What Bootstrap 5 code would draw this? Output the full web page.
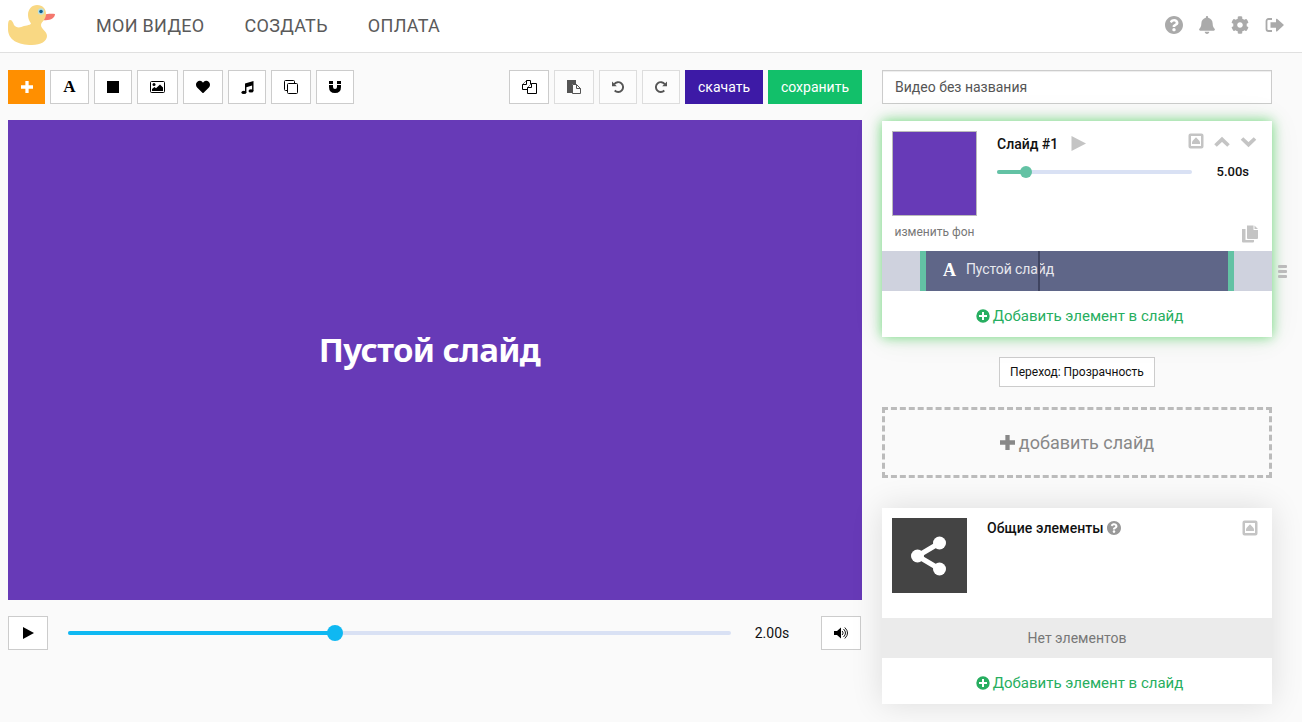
<!DOCTYPE html>
<html lang="ru">
<head>
<meta charset="utf-8">
<title>Видео без названия</title>
<meta name="viewport" content="width=device-width, initial-scale=1">
<link href="https://cdn.jsdelivr.net/npm/bootstrap@5.3.0/dist/css/bootstrap.min.css" rel="stylesheet">
<style>
body{font-family:Roboto,"Liberation Sans",sans-serif;font-size:14px;background:#fafafa;color:#111;height:722px;overflow:hidden}
svg{display:block;fill:currentColor;flex:none}
.topbar{height:53px;background:#fff;border-bottom:1px solid #e0e0e0;padding:0 18px 0 8px}
.topicons{padding-bottom:2px}
.topnav{gap:40px;margin-left:40px}
.topnav .nav-link{padding:0;color:#5a5a5a;font-weight:400;font-size:18px;line-height:24px;letter-spacing:.3px}
.topicons{color:#aaa}
.workspace{padding:17px 30px 0 8px;gap:20px}
.editor{width:854px}
.tool{height:34px;border:1px solid #ccc;border-radius:0;background:#fff;color:#000;padding:0;display:flex;align-items:center;justify-content:center;font-size:14px}
.tool:disabled{border-color:#ddd;background:#fcfcfc;color:#555;opacity:1}
.tool-add{background:#ff8f00;border-color:#ff8f00;color:#fff}
.tool-get{background:#3d1aa6;border-color:#3d1aa6;color:#fff}
.tool-save{background:#12c06a;border-color:#12c06a;color:#fff}
.w37{width:37px}.w38{width:38px}.w39{width:39px}.w40{width:40px}.w41{width:41px}.w78{width:78px}.w94{width:94px}
.serif-a{font-family:"Liberation Serif",serif;font-weight:700;font-size:17px;line-height:18px}
.stage{height:480px;margin-top:16px;background:#673ab7;color:#fff;font-family:"Noto Sans",sans-serif;font-weight:700;font-size:33px;letter-spacing:-.6px;padding:0 11px 20px 0}
.player{margin-top:16px}
.track{height:4px;border-radius:2px;background:#d9e1f4}
.track-fill{height:4px;border-radius:2px;background:#0fb8f2;display:flex;justify-content:flex-end;align-items:center}
.knob{width:16px;height:16px;border-radius:50%;background:inherit;margin-right:-8px;flex:none}
.mini .track-fill{background:#63c2a4}
.mini .knob{width:12px;height:12px;margin-right:-6px}
.side{width:390px}
.title-input{height:34px;border:1px solid #ccc;border-radius:0;font-size:14px;color:#555;padding:0 12px;box-shadow:inset 0 1px 1px rgba(0,0,0,.075)}
.panel{background:#fff;position:relative}
.panel-active{height:216px;margin-top:17px;box-shadow:0 0 12px #6fdc7b,0 0 30px rgba(0,0,0,.08)}
.panel-common{height:196px;margin-top:30px;box-shadow:0 0 30px rgba(0,0,0,.12)}
.panel-head{padding:10px 14px 0 10px}
.thumb{width:85px;height:85px;background:#673ab7;border:1px solid #bbb}
.caption-bg{font-size:12px;line-height:16px;color:#777;margin-top:8px;width:85px;white-space:nowrap}
.ptitle{font-weight:500;line-height:20px;color:#111;white-space:nowrap}
.greyic{color:#c4c4c4}
.strip{height:40px;background:#cfd2de;padding:0 38px;position:relative}
.clip{height:40px;background:#5f6688;border:solid #63c2a4;border-width:0 6px;color:#e7e8ee;padding:0 0 3px 17px;letter-spacing:-.1px}
.clip .serif-a{font-size:18px}
.cursor{position:absolute;left:156px;top:0;width:2px;height:40px;background:#3f4460}
.grip{position:absolute;right:-15px;top:144px}
.add-link{color:#27ae60;font-size:15px;line-height:20px;gap:3px;text-decoration:none;padding:15px 0 0 5px}
.add-link svg{margin-bottom:1px}
.transition{width:156px;height:30px;font-size:12px;margin:20px auto 0;color:#111}
.add-slide{height:71px;margin-top:20px;border:3px dashed #bbb;color:#888;font-size:18px;gap:4px}
.share{width:75px;height:75px;background:#444;color:#fff;padding:0 2px 0 0}
.empty{height:40px;background:#ebebeb;color:#777}
</style>
</head>
<body>
<svg width="0" height="0" class="position-absolute">
<symbol id="help" viewBox="8 8 496 496"><path d="M504 256c0 136.997-111.043 248-248 248S8 392.997 8 256C8 119.083 119.043 8 256 8s248 111.083 248 248zM262.655 90c-54.497 0-89.255 22.957-116.549 63.758-3.536 5.286-2.353 12.415 2.715 16.258l34.699 26.310c5.205 3.947 12.621 3.008 16.665-2.122 17.864-22.658 30.113-35.797 57.303-35.797 20.429 0 45.698 13.148 45.698 32.958 0 14.976-12.363 22.667-32.534 33.976C247.128 238.528 216 254.941 216 296v4c0 6.627 5.373 12 12 12h56c6.627 0 12-5.373 12-12v-1.333c0-28.462 83.186-29.647 83.186-106.667 0-58.002-60.165-102-116.531-102zM256 338c-25.365 0-46 20.635-46 46 0 25.364 20.635 46 46 46s46-20.636 46-46c0-25.365-20.635-46-46-46z"/></symbol>
<symbol id="plusc" viewBox="0 0 14 14"><path fill-rule="evenodd" d="M7 .3a6.700 6.700 0 1 0 0 13.400a6.700 6.700 0 0 0 0-13.400M6 3h2v3h3v2H8v3H6V8H3V6h3z"/></symbol>
<symbol id="collapse" viewBox="0 0 16 16"><path fill-rule="evenodd" d="M2.500.5h11a2 2 0 0 1 2 2v11a2 2 0 0 1-2 2h-11a2 2 0 0 1-2-2v-11a2 2 0 0 1 2-2M3 3v10h10V3zM4.500 8L8 4.200L11.500 8L12 9.500V11H4V9.500z"/></symbol>
</svg>

<nav class="topbar d-flex align-items-center">
  <svg width="48" height="42" viewBox="0 0 48 42"><path fill="#f4776d" d="M34 9c3 1 7-1 13 0c0 4-5 7-12 6z"/><path fill="#f9d883" d="M20 10c0-6 4-10 9-10c6 0 9 4 9 9c0 6-5 8-5 11c0 4 6 6 6 11c0 5-6 9-15 9C10 40 0 35 0 24c0-5 0-9 2-9c2 0 3 2 4 5c2 3 6 3 10 1c4-1 9-1 6-4c-1-2-2-4-2-7"/><circle cx="33" cy="6.500" r="3.200" fill="#b9dfdf"/><circle cx="33" cy="6.500" r="1.800" fill="#13618f"/></svg>
  <div class="nav topnav"><a class="nav-link" href="#">МОИ ВИДЕО</a><a class="nav-link" href="#">СОЗДАТЬ</a><a class="nav-link" href="#">ОПЛАТА</a></div>
  <div class="topicons d-flex align-items-center ms-auto">
    <svg width="18" height="18"><use href="#help"/></svg>
    <svg style="margin-left:15px" width="18" height="18" viewBox="0 0 448 512"><path d="M224 512c35.320 0 63.970-28.650 63.970-64H160.030c0 35.350 28.650 64 63.970 64zm215.390-149.710c-19.320-20.760-55.470-51.990-55.470-154.290 0-77.700-54.480-139.900-127.940-155.160V32c0-17.670-14.320-32-31.980-32s-31.980 14.330-31.980 32v20.840C118.560 68.100 64.080 130.300 64.080 208c0 102.300-36.150 133.530-55.470 154.290-6 6.450-8.660 14.160-8.610 21.710.11 16.400 12.980 32 32.100 32h383.800c19.120 0 32-15.600 32.100-32 .05-7.550-2.610-15.270-8.610-21.710z"/></svg>
    <svg style="margin-left:15px" width="18" height="18" viewBox="0 0 512 512"><path d="M487.400 315.700l-42.600-24.600c4.300-23.200 4.300-47 0-70.200l42.600-24.600c4.900-2.800 7.100-8.600 5.500-14-11.100-35.600-30-67.800-54.700-94.600-3.800-4.100-10-5.100-14.800-2.300L380.800 110c-17.900-15.400-38.500-27.300-60.800-35.100V25.800c0-5.600-3.900-10.500-9.400-11.700-36.700-8.200-74.300-7.800-109.200 0-5.500 1.200-9.400 6.100-9.400 11.700V75c-22.200 7.900-42.800 19.800-60.800 35.100L88.700 85.500c-4.900-2.800-11-1.900-14.800 2.300-24.700 26.700-43.600 58.900-54.700 94.600-1.700 5.400.6 11.200 5.500 14L67.300 221c-4.300 23.200-4.300 47 0 70.200l-42.600 24.600c-4.900 2.800-7.100 8.600-5.500 14 11.100 35.600 30 67.800 54.700 94.600 3.800 4.100 10 5.100 14.800 2.300l42.600-24.600c17.900 15.400 38.500 27.300 60.800 35.100v49.200c0 5.600 3.900 10.500 9.400 11.700 36.700 8.200 74.300 7.800 109.200 0 5.500-1.200 9.400-6.100 9.400-11.700v-49.200c22.200-7.900 42.800-19.800 60.800-35.100l42.600 24.600c4.900 2.800 11 1.900 14.800-2.300 24.700-26.700 43.600-58.900 54.700-94.600 1.500-5.500-.7-11.300-5.600-14.100zM256 336c-44.100 0-80-35.900-80-80s35.900-80 80-80 80 35.900 80 80-35.900 80-80 80z"/></svg>
    <svg style="margin-left:16px" width="19" height="18" viewBox="0 0 19 18"><path style="fill:none" stroke="currentColor" stroke-width="1.800" d="M7 3H3.500A2 2 0 0 0 1.500 5v8a2 2 0 0 0 2 2H7"/><path d="M5.500 6.200H11V3.300q.2-1 1-.5L18.500 8.500q.5.6 0 1.100L12 15.500q-.8.400-1-.5V11.800H5.500z"/></svg>
  </div>
</nav>

<main class="workspace d-flex">
  <section class="editor">
    <div class="d-flex justify-content-between">
      <div class="d-flex" style="gap:5px">
        <button class="tool tool-add w37"><svg style="margin-bottom:1px" width="12" height="12" viewBox="0 0 11 11"><path d="M4 0h3v4h4v3H7v4H4V7H0V4h4z"/></svg></button>
        <button class="tool w39"><span class="serif-a">A</span></button>
        <button class="tool w38"><svg width="12" height="12"><rect width="12" height="12"/></svg></button>
        <button class="tool w41"><svg width="15" height="12" viewBox="0 0 15 12"><rect x=".5" y=".5" width="14" height="11" rx="1" style="fill:none" stroke="currentColor"/><circle cx="4" cy="3.500" r="1.500"/><path d="M2 10V8l2.500-2L6 7.300L10 3.500l3 3V10z"/></svg></button>
        <button class="tool w40"><svg width="14" height="14" viewBox="0 0 512 512"><path d="M462.300 62.600C407.500 15.900 326 24.300 275.700 76.200L256 96.500l-19.700-20.300C186.100 24.300 104.500 15.900 49.700 62.600c-62.800 53.600-66.100 149.800-9.900 207.900l193.500 199.800c12.500 12.900 32.800 12.900 45.300 0l193.500-199.800c56.300-58.100 53-154.300-9.800-207.900z"/></svg></button>
        <button class="tool w38"><svg width="13" height="13" viewBox="0 0 13 13"><path d="M4 2.500L12.500 0v10h-1.400V4.500L5.400 6.200V11.500H4z"/><ellipse cx="2.900" cy="11.400" rx="2.500" ry="1.600"/><ellipse cx="10" cy="9.900" rx="2.500" ry="1.600"/></svg></button>
        <button class="tool w40"><svg width="14" height="14" viewBox="0 0 14 14" stroke="currentColor" style="fill:none"><path d="M3.500 10.500h-2a1 1 0 0 1-1-1v-8a1 1 0 0 1 1-1h8a1 1 0 0 1 1 1v2"/><rect x="3.500" y="3.500" width="10" height="10" rx="1"/></svg></button>
        <button class="tool w38"><svg width="12" height="12" viewBox="0 0 12 12"><path d="M0 0h4v3H0zM8 0h4v3H8zM0 4h4v2q0 2 2 2t2-2V4h4v2q0 6-6 6T0 6z"/></svg></button>
      </div>
      <div class="d-flex" style="gap:5px">
        <button class="tool w40"><svg width="15" height="14" viewBox="0 0 15 14"><g style="fill:#fff" stroke="currentColor"><path d="M.5 9.500V4.500l4-4h4v9z"/><path d="M.5 4.500h4v-4"/><path d="M5.500 13.500v-6l4-4h5v10z"/><path d="M5.500 7.500h4v-4"/></g></svg></button>
        <button class="tool w40" disabled><svg width="14" height="14" viewBox="0 0 14 14"><path d="M0 0h9v4H5v9H0z"/><path d="M5.500 4.500h4l4 4v5h-8zM9.500 4.500v4h4" style="fill:#fcfcfc" stroke="currentColor"/></svg></button>
        <button class="tool w38" disabled><svg width="12" height="12" viewBox="0 0 12 12"><path d="M2.200 3.200A4.900 4.900 0 1 1 2.700 9.500" style="fill:none" stroke="currentColor" stroke-width="1.900"/><path d="M0 .5V5.300h4.800z"/></svg></button>
        <button class="tool w38" disabled><svg width="12" height="12" viewBox="0 0 12 12"><path d="M9.800 3.200A4.900 4.900 0 1 0 9.300 9.500" style="fill:none" stroke="currentColor" stroke-width="1.900"/><path d="M12 .5V5.300H7.200z"/></svg></button>
        <button class="tool tool-get w78">скачать</button>
        <button class="tool tool-save w94">сохранить</button>
      </div>
    </div>
    <div class="stage d-flex align-items-center justify-content-center"><span>Пустой слайд</span></div>
    <div class="player d-flex align-items-center">
      <button class="tool w40"><svg width="11" height="12" viewBox="0 0 11 12"><path d="M0 0l11 6L0 12z"/></svg></button>
      <div class="track flex-grow-1" style="margin-left:20px"><div class="track-fill" style="width:40.300%"><span class="knob"></span></div></div>
      <span class="text-center" style="width:90px;padding-right:8px">2.00s</span>
      <button class="tool w40" style="margin-right:1px"><svg width="14" height="12" viewBox="0 0 14 12"><path d="M0 4h3l4-3.500v11L3 8H0z"/><path d="M8.200 4q2 2 0 4M9.500 2q4 4 0 8M10.800.5q5.500 5.500 0 11" style="fill:none" stroke="currentColor" stroke-width=".9"/></svg></button>
    </div>
  </section>

  <aside class="side">
    <input class="form-control title-input" value="Видео без названия">
    <div class="panel panel-active">
      <div class="panel-head d-flex" style="height:130px">
        <div><div class="thumb"></div><div class="caption-bg text-center">изменить фон</div></div>
        <div class="flex-grow-1 d-flex flex-column" style="margin-left:20px">
          <div class="d-flex align-items-center greyic" style="height:24px">
            <span class="ptitle" style="padding-top:2px">Слайд #1</span>
            <svg style="margin-left:13px" width="15" height="15" viewBox="0 0 15 15"><path d="M.5 0L15 7.500L.5 15z"/></svg>
            <div class="ms-auto d-flex align-items-center" style="gap:10px;padding:0 1px 4px 0">
              <svg width="16" height="16"><use href="#collapse"/></svg>
              <svg style="margin-top:2px" width="16" height="12" viewBox="0 0 16 12"><path d="M1.500 9.500L8 3.300L14.500 9.500" style="fill:none" stroke="currentColor" stroke-width="3.700"/></svg>
              <svg style="margin-top:2px" width="17" height="12" viewBox="0 0 17 12"><path d="M2 2.500L8.500 8.700L15 2.500" style="fill:none" stroke="currentColor" stroke-width="3.700"/></svg>
            </div>
          </div>
          <div class="mini d-flex align-items-center" style="height:20px;margin-top:7px">
            <div class="track" style="width:195px"><div class="track-fill" style="width:15%"><span class="knob"></span></div></div>
            <span class="ms-auto" style="font-size:13px;font-weight:500;padding-right:9px">5.00s</span>
          </div>
          <svg class="ms-auto mt-auto greyic" style="margin-bottom:8px" width="16" height="18" viewBox="0 0 16 18"><path d="M0 4h3.500v11H12v1.500a1 1 0 0 1-1 1H1a1 1 0 0 1-1-1zM5 .5h6.500V5H16v8a1 1 0 0 1-1 1H6a1 1 0 0 1-1-1zM12.500.5L16 4h-3.500z"/></svg>
        </div>
      </div>
      <div class="strip"><div class="clip d-flex align-items-center"><span class="serif-a text-white">A</span><span style="margin-left:10px">Пустой слайд</span></div><span class="cursor"></span></div>
      <a class="add-link d-flex justify-content-center align-items-center" href="#"><svg width="14" height="14"><use href="#plusc"/></svg>Добавить элемент в слайд</a>
      <svg class="grip" width="9" height="13" style="color:#bbb"><rect width="9" height="3" rx="1"/><rect y="5" width="9" height="3" rx="1"/><rect y="10" width="9" height="3" rx="1"/></svg>
    </div>
    <button class="tool transition">Переход: Прозрачность</button>
    <div class="add-slide d-flex align-items-center justify-content-center"><svg width="15" height="15" viewBox="0 0 14 14"><path d="M5 0h4v5h5v4H9v5H5V9H0V5h5z"/></svg>добавить слайд</div>
    <div class="panel panel-common">
      <div class="panel-head d-flex" style="height:110px">
        <div class="share d-flex align-items-center justify-content-center"><svg width="35" height="40" viewBox="0 0 35 40"><path d="M28.500 7L6.500 20l22 13" style="fill:none" stroke="currentColor" stroke-width="5"/><circle cx="28.500" cy="7" r="6.500"/><circle cx="6.500" cy="20" r="6.500"/><circle cx="28.500" cy="33" r="6.500"/></svg></div>
        <div class="d-flex flex-grow-1 align-items-center" style="height:20px;margin-left:20px"><span class="ptitle" style="letter-spacing:.08px">Общие элементы</span><svg style="margin:0 0 1px 3px;color:#999" width="14" height="14"><use href="#help"/></svg><svg class="ms-auto greyic" width="16" height="16"><use href="#collapse"/></svg></div>
      </div>
      <div class="empty d-flex align-items-center justify-content-center">Нет элементов</div>
      <a class="add-link d-flex justify-content-center align-items-center" href="#"><svg width="14" height="14"><use href="#plusc"/></svg>Добавить элемент в слайд</a>
    </div>
  </aside>
</main>
<script src="https://cdn.jsdelivr.net/npm/bootstrap@5.3.0/dist/js/bootstrap.bundle.min.js"></script>
</body>
</html>
